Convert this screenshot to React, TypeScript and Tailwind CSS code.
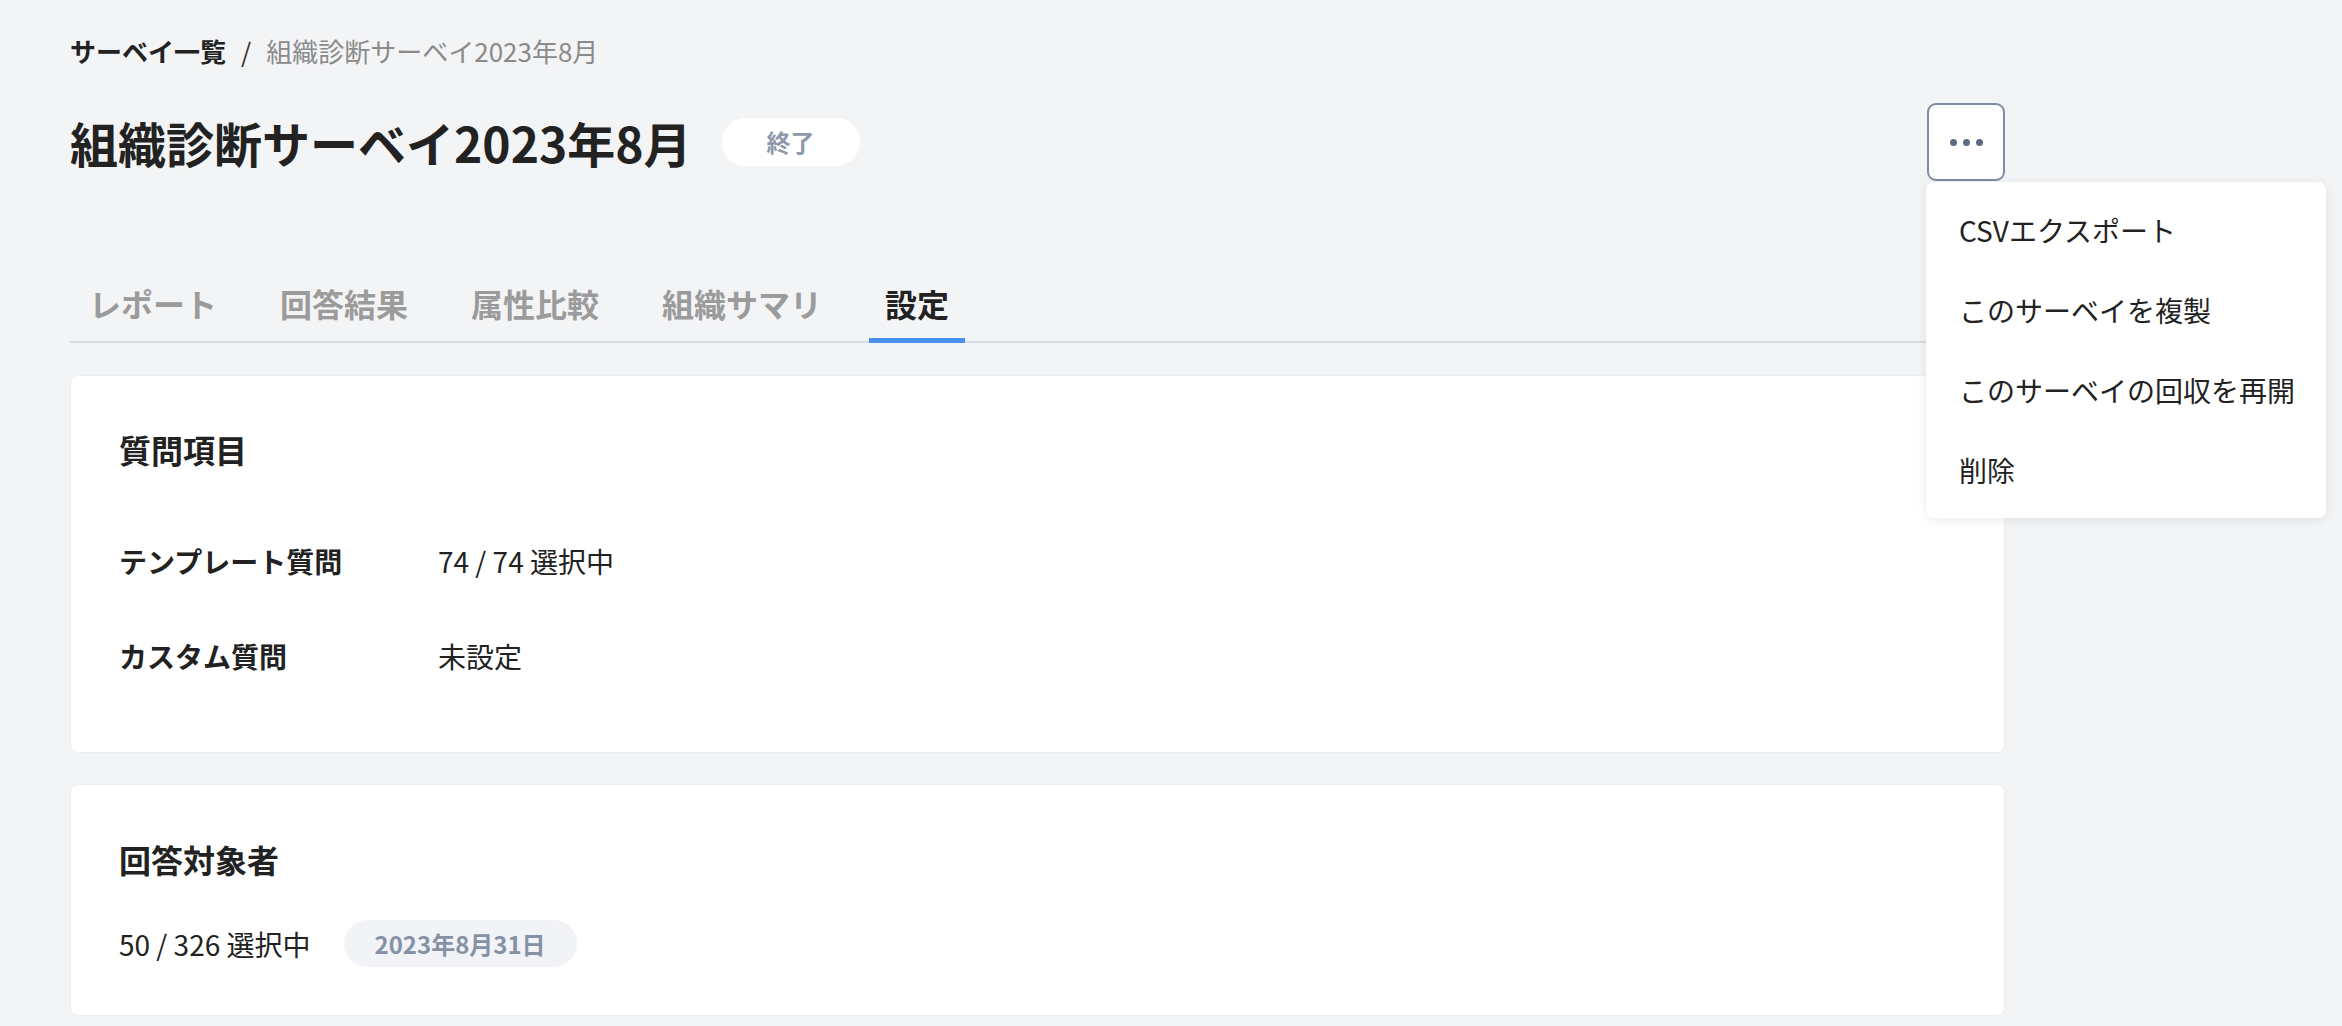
import React from 'react';

const tabs = ['レポート', '回答結果', '属性比較', '組織サマリ', '設定'];
const menuItems = ['CSVエクスポート', 'このサーベイを複製', 'このサーベイの回収を再開', '削除'];

function MoreMenu() {
  return (
    <div className="relative">
      <button className="w-[78px] h-[78px] bg-white border-2 border-[#7f8ca2] rounded-[9px] flex items-center justify-center gap-[6px]">
        <span className="w-[7px] h-[7px] rounded-full bg-[#5d6b82]" />
        <span className="w-[7px] h-[7px] rounded-full bg-[#5d6b82]" />
        <span className="w-[7px] h-[7px] rounded-full bg-[#5d6b82]" />
      </button>
      <div className="absolute left-[-1px] top-[79px] z-10 w-[400px] py-2 bg-white rounded-[8px] shadow-[0_2px_12px_rgba(0,0,0,0.08)]">
        {menuItems.map(item => (
          <div key={item} className="h-[80px] flex items-center pl-[33px] text-[28px] text-[#222]">
            {item}
          </div>
        ))}
      </div>
    </div>
  );
}

export default function App() {
  return (
    <div className="min-h-screen bg-[#f3f4f6] font-['Noto_Sans_CJK_JP','Noto_Sans',sans-serif] text-[#222]">
      <div className="ml-[70px] w-[1935px] pt-[33px]">
        {/* breadcrumb */}
        <div className="h-[36px] flex items-center text-[26px] leading-[36px]">
          <span className="font-bold text-[#222]">サーベイ一覧</span>
          <span className="mx-[15px] text-[#333]">/</span>
          <span className="text-[#8a8a8a]">組織診断サーベイ2023年8月</span>
        </div>

        {/* title row */}
        <div className="mt-[34px] h-[78px] flex items-center justify-between">
          <div className="flex items-center gap-[30px]">
            <h1 className="text-[48px] font-bold leading-none">組織診断サーベイ2023年8月</h1>
            <span className="h-[48px] px-[45px] rounded-full bg-white flex items-center text-[24px] font-bold text-[#8e99ab]">
              終了
            </span>
          </div>
          <MoreMenu />
        </div>

        {/* tabs */}
        <div className="mt-[102px] flex gap-[31px] border-b-2 border-[#d5dae1] pl-[3px]">
          {tabs.map(tab => {
            const active = tab === '設定';
            return (
              <div
                key={tab}
                className={`px-4 pb-[15px] -mb-[2px] border-b-[5px] text-[32px] leading-[40px] font-bold ${
                  active ? 'border-[#4a90f0] text-[#222]' : 'border-transparent text-[#9b9b9b]'
                }`}
              >
                {tab}
              </div>
            );
          })}
        </div>

        {/* question items */}
        <div className="mt-[32px] bg-white border border-[#eceef1] rounded-[8px] px-12 pt-[49px] pb-[49px]">
          <h2 className="h-[48px] leading-[48px] text-[32px] font-bold">質問項目</h2>
          <div className="mt-[40px]">
            <div className="h-[95px] flex items-center text-[28px]">
              <span className="w-[319px] font-bold">テンプレート質問</span>
              <span>74 / 74 選択中</span>
            </div>
            <div className="h-[95px] flex items-center text-[28px]">
              <span className="w-[319px] font-bold">カスタム質問</span>
              <span>未設定</span>
            </div>
          </div>
        </div>

        {/* respondents */}
        <div className="mt-[31px] bg-white border border-[#eceef1] rounded-[8px] px-12 pt-[50px] pb-[48px]">
          <h2 className="h-[48px] leading-[48px] text-[32px] font-bold">回答対象者</h2>
          <div className="mt-[37px] flex items-center gap-[33px]">
            <span className="text-[28px]">50 / 326 選択中</span>
            <span className="h-[47px] px-[31px] rounded-full bg-[#f1f3f6] flex items-center text-[24px] font-bold text-[#8592a6]">
              2023年8月31日
            </span>
          </div>
        </div>
      </div>
    </div>
  );
}
